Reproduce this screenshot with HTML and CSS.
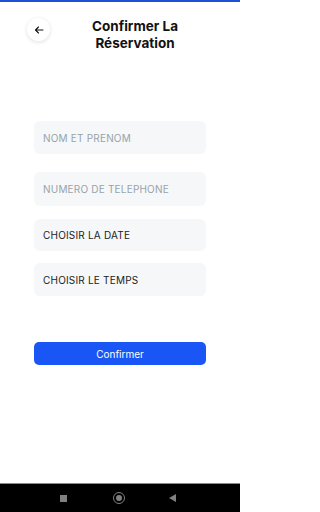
FILE: index.html
```html
<!DOCTYPE html>
<html lang="fr">
<head>
<meta charset="utf-8">
<link rel="stylesheet" href="styles.css">
</head>
<body>
<div class="screen">
  <div class="topline"></div>
  <header class="header">
    <button class="back" aria-label="Retour">
      <svg width="10" height="10" viewBox="0 0 10 10"><path d="M9 5H1.5M4.5 2L1.5 5L4.5 8" fill="none" stroke="#111" stroke-width="1.1" stroke-linecap="round" stroke-linejoin="round"/></svg>
    </button>
    <h1 class="title">Confirmer La<br>Réservation</h1>
  </header>
  <main class="form">
    <div class="field f1"><span class="ph">NOM ET PRENOM</span></div>
    <div class="field f2"><span class="ph">NUMERO DE TELEPHONE</span></div>
    <div class="field f3"><span class="val">CHOISIR LA DATE</span></div>
    <div class="field f4"><span class="val">CHOISIR LE TEMPS</span></div>
    <button class="confirm">Confirmer</button>
  </main>
  <nav class="navbar">
    <span class="nav-square"></span>
    <span class="nav-circle"></span>
    <span class="nav-tri"></span>
  </nav>
</div>
</body>
</html>
```
FILE: styles.css
```css
* { box-sizing: border-box; }
html, body { margin: 0; padding: 0; background: #fff; }
body { width: 240px; height: 512px; font-family: Inter, "Noto Sans", sans-serif; overflow: hidden; }
.screen { width: 240px; height: 512px; display: flex; flex-direction: column; }
.topline { height: 2px; background: #1f4fd8; flex: none; }
.header { display: flex; align-items: flex-start; padding: 16px 0 0 27px; height: 62px; flex: none; }
.back { width: 23px; height: 23px; border-radius: 50%; border: none; background: #fff; box-shadow: 0 1px 4px rgba(0,0,0,0.13); display: flex; align-items: center; justify-content: center; padding: 0; flex: none; }
.back svg { display: block; }
.title { flex: 1; margin: 0; padding-right: 20px; text-align: center; font-size: 13.5px; line-height: 17px; font-weight: 700; color: #111; }
.form { display: flex; flex-direction: column; padding: 57px 34px 0 34px; flex: 1; }
.field { height: 33px; background: #f6f7f9; border-radius: 6px; display: flex; align-items: center; padding-left: 9px; font-size: 10px; letter-spacing: 0.2px; }
.f2 { margin-top: 18px; height: 34px; }
.f3 { margin-top: 13px; height: 32px; }
.f4 { margin-top: 12px; }
.ph { color: #97a3ab; }
.val { color: #222; }
.confirm { margin-top: 46px; height: 23px; border: none; border-radius: 5px; background: #1a56f6; color: #fff; font-family: Inter, "Noto Sans", sans-serif; font-size: 10px; padding: 0; }
.navbar { height: 29px; flex: none; background: #000; border-top: 1px solid #8a8a8a; display: flex; align-items: center; justify-content: center; padding-right: 4px; }
.nav-square { width: 7px; height: 7px; background: #808080; margin-right: 46px; }
.nav-circle { width: 12px; height: 12px; border-radius: 50%; border: 1.5px solid #808080; position: relative; margin-right: 44px; }
.nav-circle::after { content: ""; position: absolute; left: 1.5px; top: 1.5px; width: 6px; height: 6px; border-radius: 50%; background: #808080; }
.nav-tri { width: 0; height: 0; border-top: 4px solid transparent; border-bottom: 4px solid transparent; border-right: 7px solid #808080; }
```
